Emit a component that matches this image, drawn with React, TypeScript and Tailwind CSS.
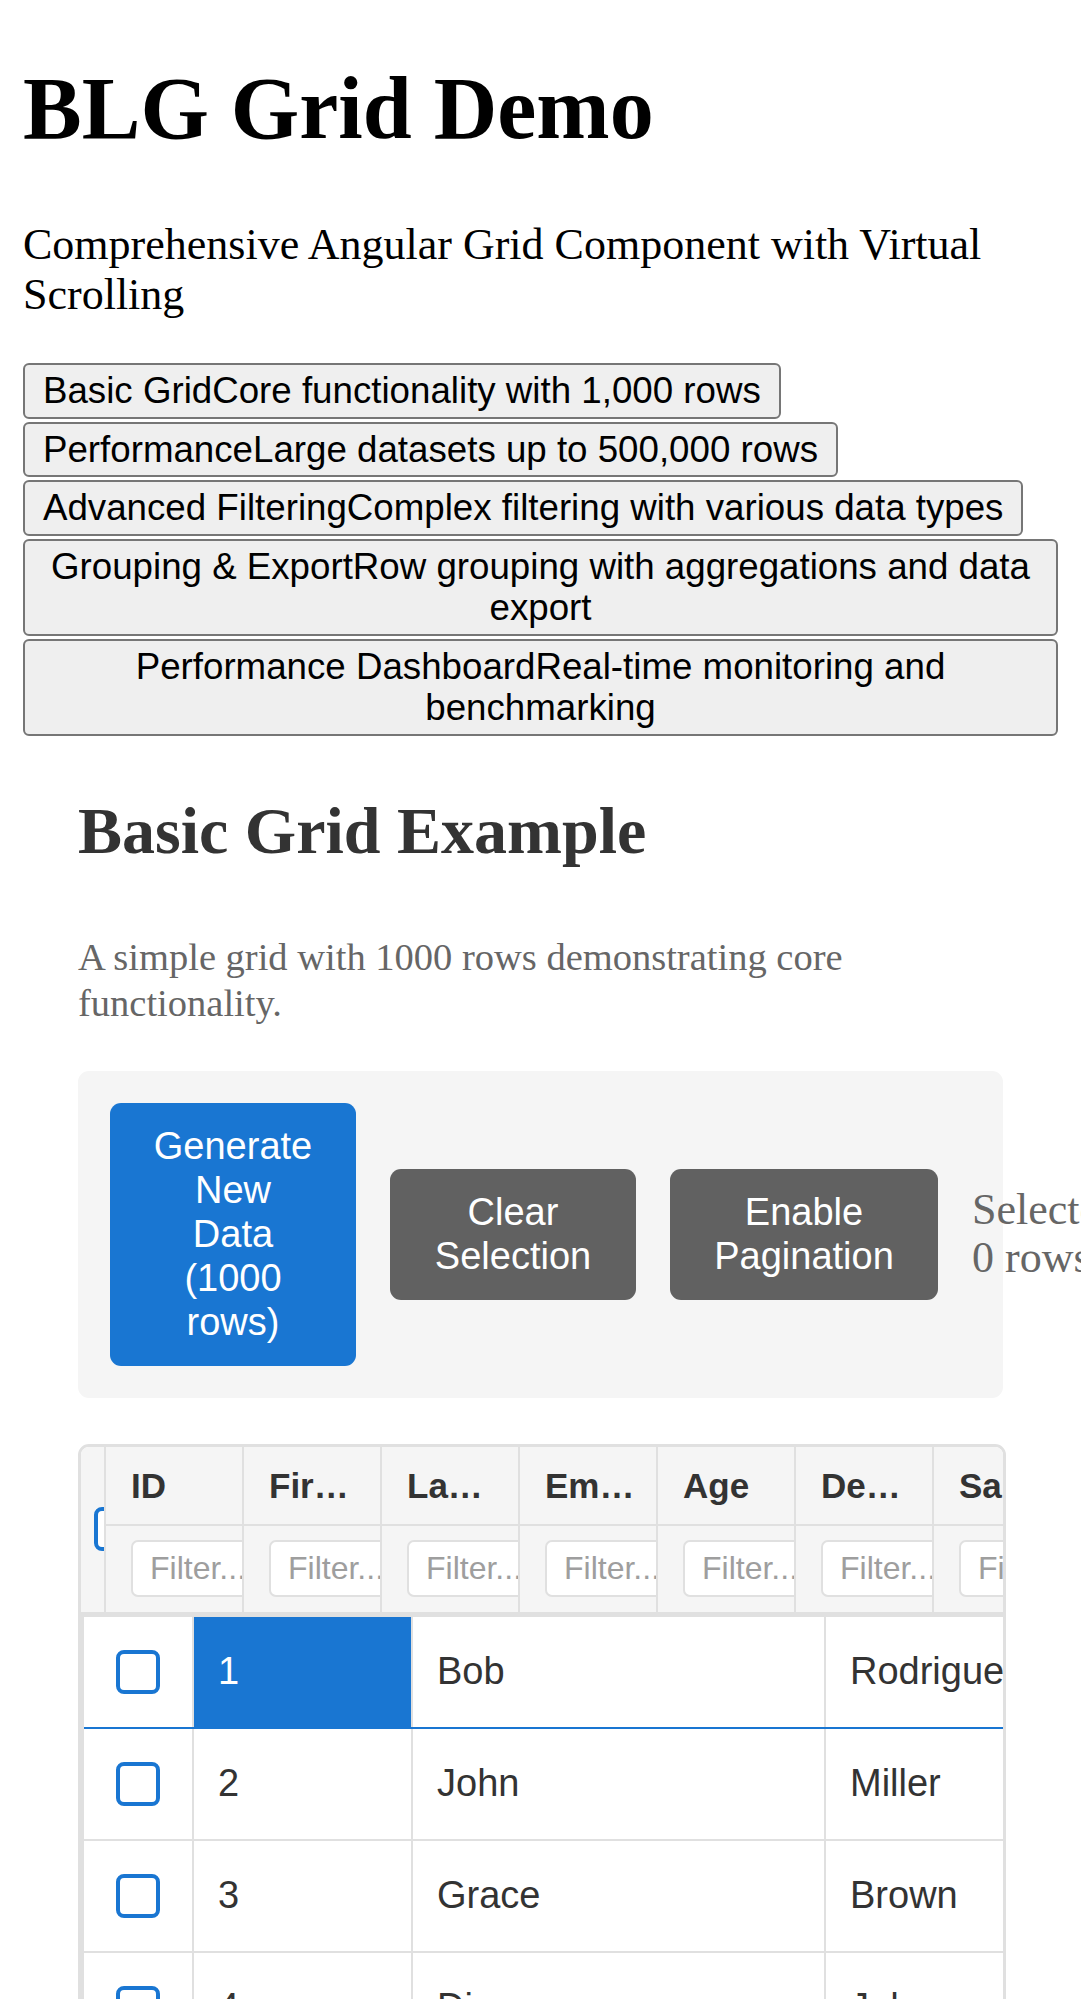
import React from "react";

const navButtons = [
  "Basic GridCore functionality with 1,000 rows",
  "PerformanceLarge datasets up to 500,000 rows",
  "Advanced FilteringComplex filtering with various data types",
  "Grouping & ExportRow grouping with aggregations and data export",
  "Performance DashboardReal-time monitoring and benchmarking",
];

const columns = ["ID", "First Name", "Last Name", "Email", "Age", "Department", "Salary"];

const rows = [
  { id: 1, first: "Bob", last: "Rodriguez" },
  { id: 2, first: "John", last: "Miller" },
  { id: 3, first: "Grace", last: "Brown" },
  { id: 4, first: "Diana", last: "Johnson" },
  { id: 5, first: "Alice", last: "Davis" },
];

const Checkbox = () => (
  <span className="block h-[44px] w-[44px] shrink-0 rounded-[8px] border-[4px] border-[#1976d2] bg-white" />
);

const BasicGrid = () => {
  return (
    <div className="-mr-[3px] mt-[46px] overflow-hidden rounded-[11px] border-[3px] border-[#e0e0e0] font-['Liberation_Sans',Arial,sans-serif] text-[#333]">
      {/* header */}
      <div className="flex border-b-[5px] border-[#e0e0e0] bg-[#f5f5f5]">
        <div className="flex w-[25px] shrink-0 items-center overflow-hidden border-r-2 border-[#e0e0e0] pl-[13px]">
          <Checkbox />
        </div>
        {columns.map((col) => (
          <div key={col} className="flex w-[138px] shrink-0 flex-col border-r-2 border-[#e0e0e0]">
            <div className="flex h-[79px] items-center border-b-2 border-[#e0e0e0] pl-[25px] pr-[20px]">
              <span className="truncate text-[35px] font-bold leading-[41px]">{col}</span>
            </div>
            <div className="flex h-[86px] items-center overflow-hidden pl-[25px]">
              <input
                placeholder="Filter..."
                className="h-[57px] w-[150px] shrink-0 rounded-[7px] border-2 border-[#e0e0e0] bg-white pl-[17px] text-[32px] outline-none placeholder:text-[#9e9e9e]"
              />
            </div>
          </div>
        ))}
      </div>

      {/* body */}
      <div className="border-l-[3px] border-[#e0e0e0]">
        {rows.map((r, i) => (
          <div
            key={r.id}
            className={
              "flex h-[112px] border-b-2 text-[38px] " +
              (i === 0 ? "border-[#1976d2]" : "border-[#e0e0e0]")
            }
          >
            <div className="flex w-[110px] shrink-0 items-center justify-center border-r-2 border-[#e0e0e0]">
              <Checkbox />
            </div>
            <div
              className={
                "flex w-[219px] shrink-0 items-center border-r-2 border-[#e0e0e0] pl-[24px] " +
                (i === 0 ? "bg-[#1976d2] text-white" : "")
              }
            >
              {r.id}
            </div>
            <div className="flex w-[413px] shrink-0 items-center border-r-2 border-[#e0e0e0] pl-[24px]">
              {r.first}
            </div>
            <div className="flex w-[300px] shrink-0 items-center pl-[24px]">{r.last}</div>
          </div>
        ))}
      </div>
    </div>
  );
};

export default function App() {
  return (
    <div className="h-[1999px] w-full overflow-hidden bg-white px-[23px] font-['Liberation_Serif','Times_New_Roman',serif] text-black">
      <h1 className="mt-[65px] text-[88px] font-bold leading-[88px]">BLG Grid Demo</h1>
      <p className="mt-[67px] text-[44px] leading-[50px]">
        Comprehensive Angular Grid Component with Virtual Scrolling
      </p>

      <div className="mt-[43px] flex flex-col items-start gap-[3px]">
        {navButtons.map((label) => (
          <button
            key={label}
            className="max-w-full rounded-[6px] border-2 border-[#767676] bg-[#efefef] px-[18px] py-[5px] text-center font-['Liberation_Sans',Arial,sans-serif] text-[36.7px] leading-[41.5px] text-black"
          >
            {label}
          </button>
        ))}
      </div>

      <section className="px-[55px]">
        <h2 className="mt-[62px] text-[66px] font-bold leading-[65px] text-[#333]">Basic Grid Example</h2>
        <p className="mt-[71px] text-[38.5px] leading-[46px] text-[#666]">
          A simple grid with 1000 rows demonstrating core functionality.
        </p>

        <div className="mt-[45px] flex items-center gap-[34px] rounded-[11px] bg-[#f5f5f5] p-[32px]">
          <button className="w-[246px] shrink-0 rounded-[11px] bg-[#1976d2] px-[43px] py-[21.5px] font-['Liberation_Sans',Arial,sans-serif] text-[38px] leading-[44px] text-white">
            Generate New Data (1000 rows)
          </button>
          <button className="w-[246px] shrink-0 rounded-[11px] bg-[#616161] px-[43px] py-[21.5px] font-['Liberation_Sans',Arial,sans-serif] text-[38px] leading-[44px] text-white">
            Clear Selection
          </button>
          <button className="w-[268px] shrink-0 rounded-[11px] bg-[#616161] px-[43px] py-[21.5px] font-['Liberation_Sans',Arial,sans-serif] text-[38px] leading-[44px] text-white">
            Enable Pagination
          </button>
          <span className="w-[190px] shrink-0 text-[44px] leading-[48px] text-[#666]">Selected: 0 rows</span>
        </div>

        <BasicGrid />
      </section>
    </div>
  );
}
